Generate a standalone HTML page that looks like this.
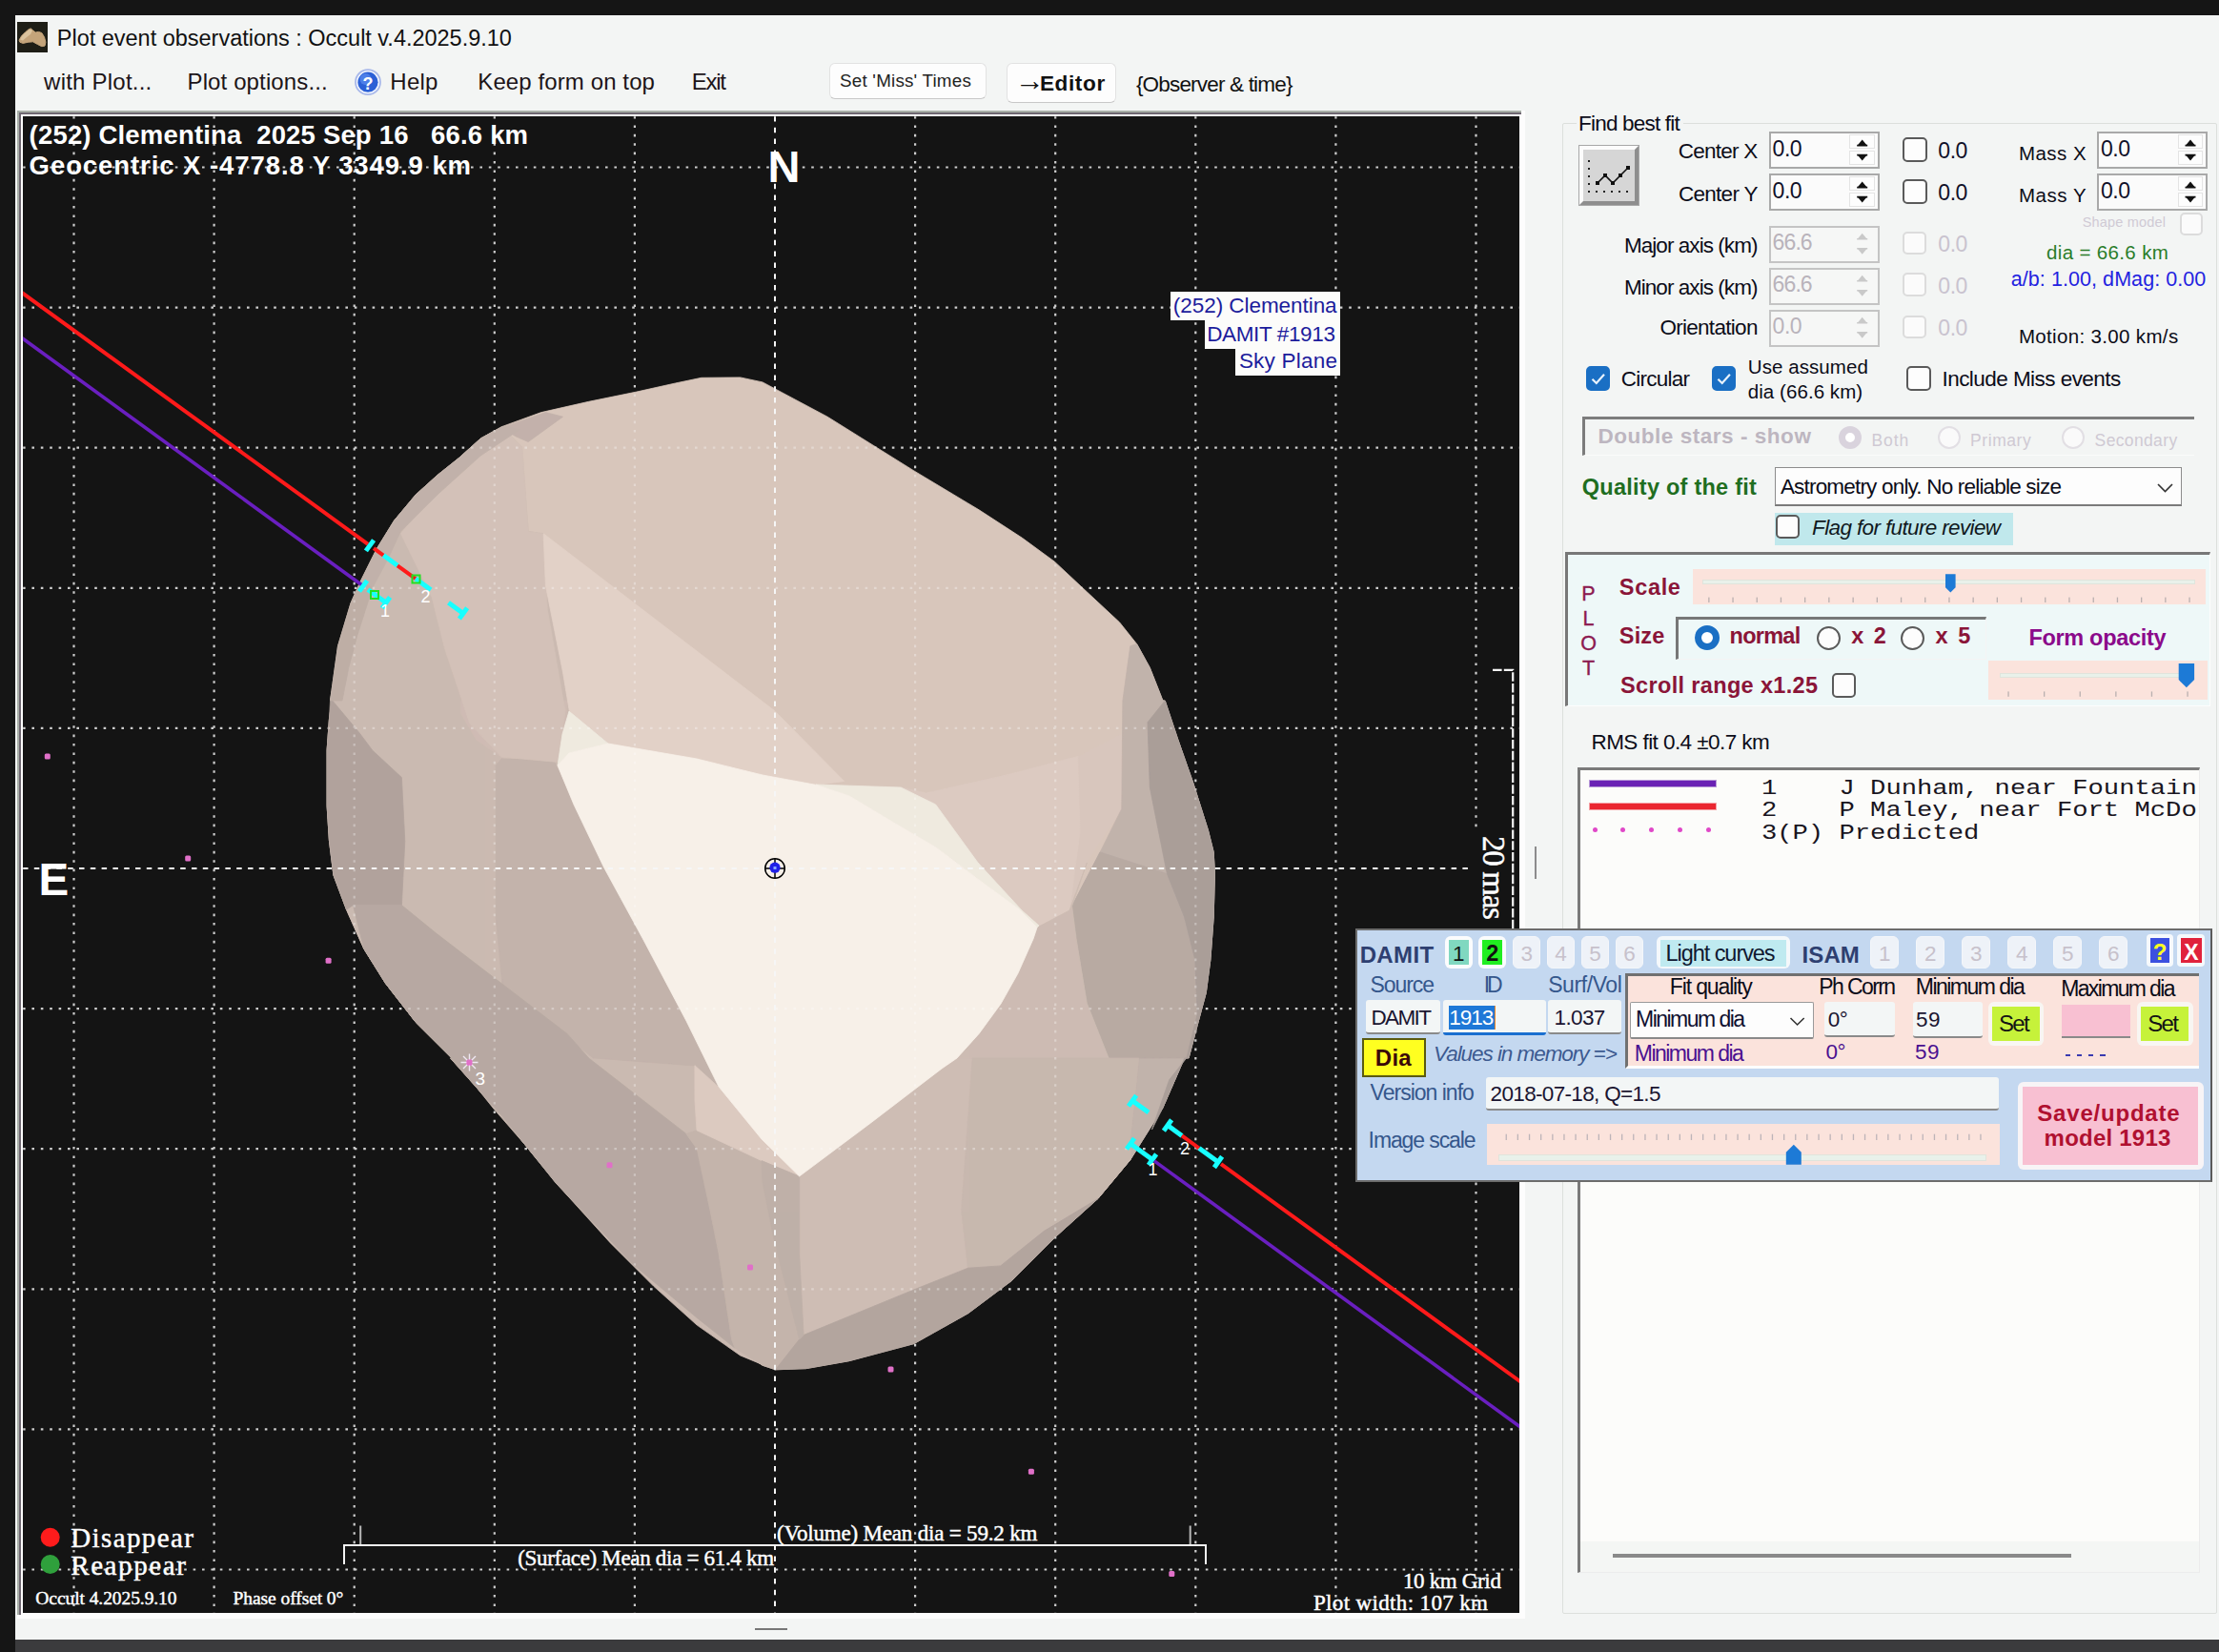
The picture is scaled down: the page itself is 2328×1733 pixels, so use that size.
<!DOCTYPE html>
<html lang="en"><head><meta charset="utf-8">
<title>Plot event observations : Occult v.4.2025.9.10</title>
<style>
html,body{margin:0;padding:0;}
body{width:2328px;height:1733px;background:#151515;position:relative;overflow:hidden;
font-family:'Liberation Sans', Arial, sans-serif;}
div{position:absolute;box-sizing:border-box;}
.t{position:absolute;white-space:pre;}
svg{position:absolute;left:0;top:0;}

.win{background:#f3f5f4;}
.spin{background:#fbfbfb;border:2px solid #a9a9a9;}
.spin.dis{border-color:#c4c4c4;background:#f6f7f6;}
.sb{background:#fdfdfd;border:1px solid #e4e4e4;}
.cb{background:#fdfdfd;border:2px solid #5a5a5a;border-radius:5px;}
.cb.dis{border-color:#dcdcdc;background:#fbfbfb;}
.cb.on{background:#1a6fc4;border-color:#1a6fc4;}
.sunk{border:2px solid;border-color:#6e6e6e #fff #fff #6e6e6e;}
.rad{border-radius:50%;border:2px solid #5a5a5a;background:#fdfdfd;}
.tb{background:#f3f6f6;border-bottom:2px solid #8a8a8a;border-radius:3px;}
.nb{background:#eef2f8;border-radius:5px;}
</style></head>
<body>
<div class="win" style="left:16.0px;top:16.0px;width:2312.0px;height:1704.0px;"></div>
<div style="left:16.0px;top:1720.0px;width:2312.0px;height:13.0px;background:#3b3b3d;"></div>
<div style="left:792.0px;top:1708.0px;width:34.0px;height:2.0px;background:#777;"></div>
<svg width="2328" height="1733" style="pointer-events:none">
<rect x="18" y="23" width="32" height="32" fill="#1e1e16"/>
<path d="M20.1 42.1 L22.5 37.8 L26.3 34 L30.2 30.7 L32.3 29.9 L34.5 31.8 L37.2 34 L40.5 33.4 L43.8 34.5 L46.5 38.9 L47.9 44.3 L47 48.1 L43.8 48.7 L39.4 46.5 L34.5 43.8 L29.1 44.3 L24.2 45.4 L20.9 44.3 Z" fill="#c4a47a" stroke="#c4a47a" stroke-width="1" stroke-linejoin="round"/>
<path d="M21 41.5 L23 37.8 L26.5 34.3 L30.2 31.2 L32.3 30.4 L34 32 L32 36 L28 39 L24 42.5 Z" fill="#dcc49e"/>
</svg>
<span id="t1" class="t" style="top:29.41px;font-size:23.5px;line-height:23.5px;color:#111;letter-spacing:-0.013px;left:59.8px;">Plot event observations : Occult v.4.2025.9.10</span>
<span id="t2" class="t" style="top:74.28px;font-size:24px;line-height:24px;color:#1c1418;letter-spacing:0.222px;left:46.1px;">with Plot...</span>
<span id="t3" class="t" style="top:74.28px;font-size:24px;line-height:24px;color:#1c1418;letter-spacing:0.124px;left:196.5px;">Plot options...</span>
<span id="t4" class="t" style="top:74.28px;font-size:24px;line-height:24px;color:#1c1418;letter-spacing:0.267px;left:409.3px;">Help</span>
<span id="t5" class="t" style="top:74.28px;font-size:24px;line-height:24px;color:#1c1418;letter-spacing:0.102px;left:501.3px;">Keep form on top</span>
<span id="t6" class="t" style="top:74.28px;font-size:24px;line-height:24px;color:#1c1418;letter-spacing:-1.285px;left:725.8px;">Exit</span>
<svg width="2328" height="1733" style="pointer-events:none">
<circle cx="386" cy="86.2" r="13" fill="#f4f7fe" stroke="#a9b9ea" stroke-width="1.8"/>
<circle cx="386" cy="86.2" r="10.6" fill="#2b60d6"/>
<circle cx="383.5" cy="83" r="6" fill="#5d8df0" opacity=".7"/>
<text x="386" y="93.5" font-family="Liberation Sans, Arial, sans-serif" font-weight="bold" font-size="18" fill="#fff" text-anchor="middle">?</text>
</svg>
<div style="left:869.5px;top:66.0px;width:165.0px;height:38.0px;background:#fdfdfd;border:1px solid #e2e2e2;border-bottom-color:#c8c8c8;border-radius:6px;"></div>
<span id="t7" class="t" style="top:76.09px;font-size:18.8px;line-height:18.8px;color:#222;letter-spacing:0.213px;left:881.1px;">Set 'Miss' Times</span>
<div style="left:1055.5px;top:65.7px;width:115.0px;height:42.0px;background:#fdfdfd;border:1px solid #e2e2e2;border-bottom-color:#c8c8c8;border-radius:6px;"></div>
<span id="t8" class="t" style="top:69.26px;font-size:31px;line-height:31px;color:#111;font-weight:bold;left:1065.0px;">→</span>
<span id="t9" class="t" style="top:76.87px;font-size:22.6px;line-height:22.6px;color:#111;font-weight:bold;letter-spacing:0.611px;left:1090.9px;">Editor</span>
<span id="t10" class="t" style="top:77.95px;font-size:22.5px;line-height:22.5px;color:#111;letter-spacing:-0.816px;left:1191.9px;">{Observer &amp; time}</span>
<div style="left:18.0px;top:116.0px;width:1582.0px;height:1581.5px;background:#fdfdfd;"></div>
<div style="left:18.0px;top:116.0px;width:1578.0px;height:1577.5px;border-style:solid;border-width:2px 0 0 2px;border-color:#a9b0a9;"></div>
<div style="left:20.0px;top:118.0px;width:1576.0px;height:1575.5px;border-style:solid;border-width:2px 0 0 2px;border-color:#6f6872;"></div>
<div style="left:24.2px;top:122.3px;width:1569.8px;height:1569.5px;background:#141414;"></div>
<svg width="2328" height="1733" viewBox="0 0 2328 1733">
<defs><clipPath id="pc"><rect x="24.2" y="122.3" width="1569.8" height="1569.5"/></clipPath>
<clipPath id="ac"><polygon points="735.8,396.3 776.6,395.9 800.0,400.9 868.1,437.2 958.9,493.9 1027.0,534.8 1072.4,564.3 1106.4,589.2 1140.4,621.0 1174.5,652.8 1192.6,675.5 1206.3,700.4 1219.9,734.9 1222.2,735.0 1235.8,775.9 1251.7,821.2 1267.5,871.2 1273.2,893.9 1274.4,916.6 1273.2,962.0 1269.8,1007.4 1265.3,1041.4 1256.2,1075.4 1247.1,1109.9 1242.6,1110.0 1219.9,1162.2 1185.8,1216.7 1151.8,1257.5 1106.4,1298.4 1061.0,1343.8 1015.6,1377.8 958.9,1409.6 890.8,1427.7 845.4,1435.7 813.6,1436.8 800.0,1432.3 731.2,1382.4 663.1,1325.6 583.7,1241.6 527.0,1171.3 472.5,1110.0 481.6,1117.7 436.2,1072.4 404.4,1031.5 381.7,995.2 363.5,954.3 349.9,918.0 345.4,881.7 343.1,845.4 343.1,800.0 343.1,786.7 345.4,754.9 352.2,705.0 346.5,734.9 354.5,677.7 368.1,632.4 378.3,609.7 395.3,575.6 413.5,546.1 436.2,518.9 458.9,498.4 481.6,480.3 504.3,459.9 527.0,447.4 567.8,432.6 617.7,421.3 667.7,411.1 708.5,402.0"/></clipPath></defs>
<g clip-path="url(#pc)">
<g stroke="#cecece" stroke-width="2.2" stroke-dasharray="2.6 6.8" opacity="1"><line x1="77.5" y1="122" x2="77.5" y2="1692"/><line x1="24" y1="175.5" x2="1594" y2="175.5"/><line x1="224.6" y1="122" x2="224.6" y2="1692"/><line x1="24" y1="322.6" x2="1594" y2="322.6"/><line x1="371.7" y1="122" x2="371.7" y2="1692"/><line x1="24" y1="469.7" x2="1594" y2="469.7"/><line x1="518.8" y1="122" x2="518.8" y2="1692"/><line x1="24" y1="616.8" x2="1594" y2="616.8"/><line x1="665.9" y1="122" x2="665.9" y2="1692"/><line x1="24" y1="763.9" x2="1594" y2="763.9"/><line x1="960.1" y1="122" x2="960.1" y2="1692"/><line x1="24" y1="1058.1" x2="1594" y2="1058.1"/><line x1="1107.2" y1="122" x2="1107.2" y2="1692"/><line x1="24" y1="1205.2" x2="1594" y2="1205.2"/><line x1="1254.3" y1="122" x2="1254.3" y2="1692"/><line x1="24" y1="1352.3" x2="1594" y2="1352.3"/><line x1="1401.4" y1="122" x2="1401.4" y2="1692"/><line x1="24" y1="1499.4" x2="1594" y2="1499.4"/><line x1="1548.5" y1="122" x2="1548.5" y2="1692"/><line x1="24" y1="1646.5" x2="1594" y2="1646.5"/></g>
<polygon points="735.8,396.3 776.6,395.9 800.0,400.9 868.1,437.2 958.9,493.9 1027.0,534.8 1072.4,564.3 1106.4,589.2 1140.4,621.0 1174.5,652.8 1192.6,675.5 1206.3,700.4 1219.9,734.9 1222.2,735.0 1235.8,775.9 1251.7,821.2 1267.5,871.2 1273.2,893.9 1274.4,916.6 1273.2,962.0 1269.8,1007.4 1265.3,1041.4 1256.2,1075.4 1247.1,1109.9 1242.6,1110.0 1219.9,1162.2 1185.8,1216.7 1151.8,1257.5 1106.4,1298.4 1061.0,1343.8 1015.6,1377.8 958.9,1409.6 890.8,1427.7 845.4,1435.7 813.6,1436.8 800.0,1432.3 731.2,1382.4 663.1,1325.6 583.7,1241.6 527.0,1171.3 472.5,1110.0 481.6,1117.7 436.2,1072.4 404.4,1031.5 381.7,995.2 363.5,954.3 349.9,918.0 345.4,881.7 343.1,845.4 343.1,800.0 343.1,786.7 345.4,754.9 352.2,705.0 346.5,734.9 354.5,677.7 368.1,632.4 378.3,609.7 395.3,575.6 413.5,546.1 436.2,518.9 458.9,498.4 481.6,480.3 504.3,459.9 527.0,447.4 567.8,432.6 617.7,421.3 667.7,411.1 708.5,402.0" fill="#d8c6bb" stroke="#d8c6bb" stroke-width="0.8"/>
<polygon points="499.7,466.7 527.0,448.5 547.4,468.9 554.2,557.5 570.1,559.7 572.4,614.2 590.5,705.0 597.3,745.8 585.1,802.6 602.0,844.0 633.6,910.0 674.5,985.0 720.0,1071.0 754.0,1140.0 799.0,1195.0 838.6,1234.0 837.9,1433.2 803.9,1433.2 776.6,1421.9 731.2,1390.1 685.8,1349.3 640.4,1303.9 595.1,1253.9 549.7,1199.5 517.9,1163.1 481.6,1117.7 436.2,1072.4 404.4,1031.5 381.7,995.2 363.5,954.3 349.9,918.0 345.4,881.7 343.1,845.4 343.1,800.0 343.1,786.7 345.4,754.9 352.2,705.0 363.5,668.7 374.9,636.9 390.8,596.0 408.9,564.3 436.2,528.0 472.5,491.6" fill="#cbbab1" stroke="#cbbab1" stroke-width="0.8"/>
<polygon points="527.0,795.1 581.4,798.5 601.9,843.9 633.6,909.8 674.5,984.7 719.9,1070.9 742.6,1109.9 754.0,1140.0 729.0,1118.0 622.3,1109.9 527.0,1032.3 520.2,962.0 520.2,803.1" fill="#c3b3ab" stroke="#c3b3ab" stroke-width="0.8"/>
<polygon points="483.8,735.0 595.1,735.0 592.8,775.9 581.4,796.3 527.0,795.1 499.7,775.9 483.8,748.6" fill="#cfbcb4" stroke="#cfbcb4" stroke-width="0.8"/>
<polygon points="420.5,559.7 499.7,466.5 527.0,448.5 547.7,469.2 554.3,557.7 569.6,559.7 574.3,639.6 592.9,746.2 585.0,799.4 526.4,794.1 493.1,759.5 466.4,679.6 453.1,626.3" fill="#d3c1b8" stroke="#d3c1b8" stroke-width="0.8"/>
<polygon points="527.0,448.5 572.4,432.6 590.5,437.2 554.2,463.5 540.6,457.6" fill="#c3b2ab" stroke="#c3b2ab" stroke-width="0.8"/>
<polygon points="378.3,609.7 395.3,575.6 413.5,546.1 436.2,518.9 458.9,498.4 481.6,480.3 504.3,459.9 527.0,447.4 545.1,450.8 504.3,478.0 458.9,518.9 420.3,557.5 406.7,587.0 390.8,616.5" fill="#c2b2aa" stroke="#c2b2aa" stroke-width="0.8"/>
<polygon points="346.5,735.0 348.8,735.0 377.2,769.0 390.8,787.2 421.4,815.6 424.8,882.5 421.4,949.5 370.4,949.5 363.5,954.3 349.9,918.0 345.4,881.7 343.1,845.4 343.1,800.0 343.1,786.7 345.4,754.9" fill="#b1a39d" stroke="#b1a39d" stroke-width="0.8"/>
<polygon points="346.5,734.9 354.5,677.7 368.1,632.4 378.3,609.7 390.8,616.5 374.9,666.4 365.8,700.4 359.0,734.9" fill="#beaea6" stroke="#beaea6" stroke-width="0.8"/>
<polygon points="370.4,949.5 421.4,949.5 458.9,980.1 527.0,1032.3 595.1,1084.5 617.7,1110.0 719.9,1189.4 731.2,1205.3 744.8,1268.9 753.9,1314.3 767.5,1405.1 770.9,1414.1 731.2,1382.4 663.1,1325.6 583.7,1241.6 527.0,1171.3 472.5,1110.0 481.6,1117.7 436.2,1072.4 404.4,1031.5 381.7,995.2" fill="#b7a9a2" stroke="#b7a9a2" stroke-width="0.8"/>
<polygon points="719.9,1189.4 731.2,1205.3 744.8,1268.9 753.9,1314.3 767.5,1405.1 770.9,1414.1 800.0,1432.3 813.6,1436.8 838.6,1405.1 838.6,1233.7 799.0,1217.6 731.0,1185.8" fill="#c4b4ab" stroke="#c4b4ab" stroke-width="0.8"/>
<polygon points="728.9,1117.7 753.9,1140.4 799.3,1194.9 838.6,1234.0 799.0,1217.6 731.0,1185.8 729.0,1154.0" fill="#dccac0" stroke="#dccac0" stroke-width="0.8"/>
<polygon points="570.1,559.7 812.9,745.8 885.6,819.4 857.0,823.5 800.0,813.0 731.0,796.0 638.0,780.0 597.3,745.8 590.5,705.0 572.4,614.2" fill="#e2d1c7" stroke="#e2d1c7" stroke-width="0.8"/>
<polygon points="1130.7,793.5 1177.5,769.0 1177.5,848.5 1140.4,905.0 1122.0,955.0 1133.0,873.0" fill="#d8c6bd" stroke="#d8c6bd" stroke-width="0.8"/>
<polygon points="945.0,826.0 971.8,832.1 1060.0,812.0 1130.7,793.5 1133.0,873.0 1122.0,955.0 1090.0,971.0 1072.0,955.0 1026.0,905.0 981.6,843.9" fill="#dccac1" stroke="#dccac1" stroke-width="0.8"/>
<polygon points="1185.8,677.7 1192.6,675.5 1206.3,700.4 1219.9,734.9 1222.2,735.0 1235.8,775.9 1251.7,821.2 1267.5,871.2 1273.2,893.9 1274.4,916.6 1273.2,962.0 1269.8,1007.4 1265.3,1041.4 1256.2,1075.4 1247.1,1109.9 1242.6,1110.0 1219.9,1162.2 1185.8,1216.7 1185.8,1196.2 1192.6,1132.7 1194.9,1110.0 1140.4,1052.7 1129.1,984.7 1124.6,950.6 1154.1,893.9 1176.8,848.5 1177.9,735.0" fill="#c2b3ab" stroke="#c2b3ab" stroke-width="0.8"/>
<polygon points="1154.1,893.9 1224.4,916.6 1242.6,962.0 1253.9,1007.4 1256.2,1064.1 1244.8,1109.9 1194.9,1110.0 1192.6,1132.7 1185.8,1196.2 1163.1,1109.9 1140.4,1052.7 1129.1,984.7 1124.6,950.6" fill="#b8aaa3" stroke="#b8aaa3" stroke-width="0.8"/>
<polygon points="1222.2,735.0 1235.8,775.9 1251.7,821.2 1267.5,871.2 1273.2,893.9 1274.4,916.6 1273.2,962.0 1269.8,1007.4 1265.3,1041.4 1256.2,1075.4 1247.1,1109.9 1242.6,1110.0 1219.9,1162.2 1208.5,1184.9 1226.7,1132.7 1244.8,1109.9 1256.2,1064.1 1253.9,1007.4 1242.6,962.0 1224.4,916.6 1215.3,871.2 1206.3,825.8 1204.0,757.7" fill="#aa9e99" stroke="#aa9e99" stroke-width="0.8"/>
<polygon points="1088.0,973.0 1122.0,955.0 1140.4,905.0 1124.6,950.6 1129.1,984.7 1140.4,1052.7 1163.1,1109.9 1185.8,1196.2 1185.8,1216.7 1151.8,1257.5 1095.1,1291.6 1049.7,1327.9 1015.6,1330.2 1008.8,1268.9 1020.2,1110.0 1004.0,1110.0 1027.0,1084.5 1050.0,1053.0 1068.0,1021.0 1084.0,985.0" fill="#cdbcb3" stroke="#cdbcb3" stroke-width="0.8"/>
<polygon points="838.6,1233.7 913.5,1178.1 988.4,1121.3 1004.3,1110.0 1020.2,1110.0 1008.8,1268.9 1015.6,1330.2 958.9,1352.9 843.1,1400.5 838.6,1314.3" fill="#cebdb4" stroke="#cebdb4" stroke-width="0.8"/>
<polygon points="1020.2,1110.0 1194.9,1110.0 1192.6,1132.7 1185.8,1196.2 1185.8,1216.7 1151.8,1257.5 1095.1,1291.6 1049.7,1327.9 1015.6,1330.2 1008.8,1268.9" fill="#c8b8af" stroke="#c8b8af" stroke-width="0.8"/>
<polygon points="843.1,1400.5 958.9,1352.9 1015.6,1330.2 1049.7,1327.9 1095.1,1291.6 1151.8,1257.5 1106.4,1298.4 1061.0,1343.8 1015.6,1377.8 958.9,1409.6 890.8,1427.7 845.4,1435.7 813.6,1436.8 838.6,1405.1" fill="#b3a59e" stroke="#b3a59e" stroke-width="0.8"/>
<polygon points="799.0,1217.6 838.6,1234.0 838.6,1233.7 838.6,1314.3 843.1,1400.5 838.6,1405.1 812.0,1300.0 800.0,1240.0" fill="#bfb0a8" stroke="#bfb0a8" stroke-width="0.8"/>
<polygon points="856.0,823.0 945.0,826.0 981.6,843.9 1026.0,905.0 1072.0,955.0 1090.0,971.0 1088.0,973.0 1068.0,953.0 1027.0,923.0 982.0,889.0 936.0,862.0 891.0,835.0" fill="#efeadf" stroke="#efeadf" stroke-width="0.8"/>
<polygon points="597.0,746.0 638.0,780.0 597.0,790.0 585.0,803.0 590.0,770.0" fill="#efeadf" stroke="#efeadf" stroke-width="0.8"/>
<polygon points="585.0,803.0 597.0,790.0 638.0,780.0 731.0,796.0 800.0,813.0 857.0,823.5 891.0,835.0 936.0,862.0 982.0,889.0 1027.0,923.0 1068.0,953.0 1088.0,973.0 1084.0,985.0 1068.0,1021.0 1050.0,1053.0 1027.0,1084.5 1004.0,1110.0 988.0,1121.0 913.5,1178.0 838.6,1234.0 799.0,1195.0 754.0,1140.0 720.0,1071.0 674.5,985.0 633.6,910.0 602.0,844.0" fill="#f7f0e8" stroke="#f7f0e8" stroke-width="0.8"/>
<g clip-path="url(#ac)"><g stroke="#ffffff" stroke-width="2.2" stroke-dasharray="2.6 6.8" opacity="0.32"><line x1="77.5" y1="122" x2="77.5" y2="1692"/><line x1="24" y1="175.5" x2="1594" y2="175.5"/><line x1="224.6" y1="122" x2="224.6" y2="1692"/><line x1="24" y1="322.6" x2="1594" y2="322.6"/><line x1="371.7" y1="122" x2="371.7" y2="1692"/><line x1="24" y1="469.7" x2="1594" y2="469.7"/><line x1="518.8" y1="122" x2="518.8" y2="1692"/><line x1="24" y1="616.8" x2="1594" y2="616.8"/><line x1="665.9" y1="122" x2="665.9" y2="1692"/><line x1="24" y1="763.9" x2="1594" y2="763.9"/><line x1="960.1" y1="122" x2="960.1" y2="1692"/><line x1="24" y1="1058.1" x2="1594" y2="1058.1"/><line x1="1107.2" y1="122" x2="1107.2" y2="1692"/><line x1="24" y1="1205.2" x2="1594" y2="1205.2"/><line x1="1254.3" y1="122" x2="1254.3" y2="1692"/><line x1="24" y1="1352.3" x2="1594" y2="1352.3"/><line x1="1401.4" y1="122" x2="1401.4" y2="1692"/><line x1="24" y1="1499.4" x2="1594" y2="1499.4"/><line x1="1548.5" y1="122" x2="1548.5" y2="1692"/><line x1="24" y1="1646.5" x2="1594" y2="1646.5"/></g></g>
<line x1="813.0" y1="122" x2="813.0" y2="1692" stroke="#f6f6f6" stroke-width="2" stroke-dasharray="5.5 6.3"/>
<line x1="24" y1="911.0" x2="1546" y2="911.0" stroke="#f6f6f6" stroke-width="2" stroke-dasharray="5.5 6.3"/>
<rect x="46.8" y="790.4" width="6" height="6" rx="1.5" fill="#e070c8"/>
<rect x="194.2" y="897.6" width="6" height="6" rx="1.5" fill="#e070c8"/>
<rect x="341.6" y="1004.8" width="6" height="6" rx="1.5" fill="#e070c8"/>
<rect x="489.1" y="1112.0" width="6" height="6" rx="1.5" fill="#e070c8"/>
<rect x="636.5" y="1219.2" width="6" height="6" rx="1.5" fill="#e070c8"/>
<rect x="784.0" y="1326.4" width="6" height="6" rx="1.5" fill="#e070c8"/>
<rect x="931.5" y="1433.6" width="6" height="6" rx="1.5" fill="#e070c8"/>
<rect x="1078.9" y="1540.8" width="6" height="6" rx="1.5" fill="#e070c8"/>
<rect x="1226.3" y="1648.0" width="6" height="6" rx="1.5" fill="#e070c8"/>
<g stroke="#f0e8f4" stroke-width="1.4"><path d="M483.5 1114.5h18M492.5 1105.5v18M486.0 1108.0l13 13M486.0 1121.0l13 -13"/></g><rect x="489.5" y="1111.5" width="6" height="6" rx="1.5" fill="#e070c8"/>
<line x1="20.0" y1="304.8" x2="386.0" y2="570.8" stroke="#ff1a1a" stroke-width="4"/>
<line x1="392.1" y1="566.6" x2="383.9" y2="577.9" stroke="#18ffff" stroke-width="5"/>
<line x1="392.0" y1="575.2" x2="402.3" y2="582.6" stroke="#ff1a1a" stroke-width="4"/>
<line x1="402.3" y1="582.6" x2="417.0" y2="593.3" stroke="#18ffff" stroke-width="5"/>
<line x1="417.0" y1="593.3" x2="436.0" y2="607.1" stroke="#ff1a1a" stroke-width="4"/>
<line x1="436.0" y1="607.1" x2="452.0" y2="618.8" stroke="#18ffff" stroke-width="5"/>
<line x1="470.5" y1="632.2" x2="486.0" y2="643.5" stroke="#18ffff" stroke-width="5"/>
<line x1="490.1" y1="637.8" x2="481.9" y2="649.1" stroke="#18ffff" stroke-width="5"/>
<line x1="20.0" y1="352.4" x2="380.0" y2="614.0" stroke="#6a1fc0" stroke-width="3.6"/>
<line x1="385.1" y1="609.1" x2="376.9" y2="620.4" stroke="#18ffff" stroke-width="5"/>
<line x1="386.0" y1="618.4" x2="405.0" y2="632.2" stroke="#18ffff" stroke-width="5"/>
<line x1="409.1" y1="626.5" x2="400.9" y2="637.9" stroke="#18ffff" stroke-width="5"/>
<rect x="432.5" y="603.5" width="8" height="8" fill="none" stroke="#22e022" stroke-width="2"/>
<rect x="389" y="620" width="8" height="8" fill="none" stroke="#22e022" stroke-width="2"/>
<line x1="1192.1" y1="1149.1" x2="1183.9" y2="1160.4" stroke="#18ffff" stroke-width="5"/>
<line x1="1188.0" y1="1154.7" x2="1205.0" y2="1167.1" stroke="#18ffff" stroke-width="5"/>
<line x1="1190.1" y1="1194.1" x2="1181.9" y2="1205.4" stroke="#18ffff" stroke-width="5"/>
<line x1="1186.0" y1="1199.8" x2="1209.0" y2="1216.5" stroke="#18ffff" stroke-width="5"/>
<line x1="1213.1" y1="1210.8" x2="1204.9" y2="1222.1" stroke="#18ffff" stroke-width="5"/>
<line x1="1211.0" y1="1217.9" x2="1600.0" y2="1500.6" stroke="#6a1fc0" stroke-width="3.6"/>
<line x1="1229.1" y1="1174.8" x2="1220.9" y2="1186.2" stroke="#18ffff" stroke-width="5"/>
<line x1="1225.0" y1="1180.5" x2="1240.0" y2="1191.4" stroke="#18ffff" stroke-width="5"/>
<line x1="1240.0" y1="1191.4" x2="1258.0" y2="1204.5" stroke="#ff1a1a" stroke-width="4"/>
<line x1="1258.0" y1="1204.5" x2="1278.0" y2="1219.0" stroke="#18ffff" stroke-width="5"/>
<line x1="1282.1" y1="1213.3" x2="1273.9" y2="1224.7" stroke="#18ffff" stroke-width="5"/>
<line x1="1281.0" y1="1221.2" x2="1600.0" y2="1453.0" stroke="#ff1a1a" stroke-width="4"/>
<text x="399" y="646.5" font-family="Liberation Sans, Arial, sans-serif" font-size="18" fill="#fff">1</text>
<text x="441.5" y="632.3" font-family="Liberation Sans, Arial, sans-serif" font-size="18" fill="#fff">2</text>
<text x="1204.5" y="1232.5" font-family="Liberation Sans, Arial, sans-serif" font-size="18" fill="#fff">1</text>
<text x="1238" y="1210.5" font-family="Liberation Sans, Arial, sans-serif" font-size="18" fill="#fff">2</text>
<text x="498.5" y="1137.5" font-family="Liberation Sans, Arial, sans-serif" font-size="19" fill="#fff">3</text>
<g fill="none" stroke="#000" stroke-width="1.5"><circle cx="813.0" cy="911.0" r="10.3"/><path d="M813.0 901.0v20M803.0 911.0h20"/></g><circle cx="813.0" cy="910.2" r="5.6" fill="#2020e8"/><rect x="811.5" y="909.0" width="3" height="3" fill="#8aa8ff"/>
<path d="M361 1641 V1621 H1265 V1641" fill="none" stroke="#f4f4f4" stroke-width="2"/>
<path d="M378.2 1600.5 V1620 M1248.7 1600.5 V1620" fill="none" stroke="#b8b8b8" stroke-width="2"/>
<rect x="1545.5" y="868" width="37" height="104" fill="#141414"/>
<path d="M1566 702.8 H1587.2 V1119.5 H1566" fill="none" stroke="#f4f4f4" stroke-width="2.2" stroke-dasharray="9.6 2.2"/>
<circle cx="52.7" cy="1612.7" r="10" fill="#ff1c1c"/><circle cx="52.7" cy="1641" r="10" fill="#2fa03c"/>
</g></svg>
<span id="t11" class="t" style="top:127.72px;font-size:27.5px;line-height:27.5px;color:#fff;font-weight:bold;letter-spacing:0.179px;left:30.6px;">(252) Clementina  2025 Sep 16   66.6 km</span>
<span id="t12" class="t" style="top:159.72px;font-size:27.5px;line-height:27.5px;color:#fff;font-weight:bold;letter-spacing:0.929px;left:30.6px;">Geocentric X -4778.8 Y 3349.9 km</span>
<span id="t13" class="t" style="top:151.21px;font-size:47px;line-height:47px;color:#fff;font-weight:bold;left:805.4px;">N</span>
<span id="t14" class="t" style="top:898.79px;font-size:47.5px;line-height:47.5px;color:#fff;font-weight:bold;left:40.5px;">E</span>
<div style="left:1227.9px;top:306.0px;width:178.1px;height:30.0px;background:#fcfcfa;"></div>
<span id="t15" class="t" style="top:309.85px;font-size:22.5px;line-height:22.5px;color:#1c1c9c;letter-spacing:-0.051px;left:1230.8px;">(252) Clementina</span>
<div style="left:1263.8px;top:336.0px;width:142.2px;height:30.0px;background:#fcfcfa;"></div>
<span id="t16" class="t" style="top:339.85px;font-size:22.5px;line-height:22.5px;color:#1c1c9c;letter-spacing:-0.368px;left:1266.2px;">DAMIT #1913</span>
<div style="left:1295.7px;top:365.9px;width:110.3px;height:28.1px;background:#fcfcfa;"></div>
<span id="t17" class="t" style="top:367.65px;font-size:22.5px;line-height:22.5px;color:#1c1c9c;letter-spacing:0.214px;left:1299.9px;">Sky Plane</span>
<span id="t18" class="t" style="top:1599.31px;font-size:29px;line-height:29px;color:#fff;font-family:'Liberation Serif', 'Times New Roman', serif;letter-spacing:1.406px;left:74.2px;-webkit-text-stroke:0.45px #fff;">Disappear</span>
<span id="t19" class="t" style="top:1627.71px;font-size:29px;line-height:29px;color:#fff;font-family:'Liberation Serif', 'Times New Roman', serif;letter-spacing:1.601px;left:74.2px;-webkit-text-stroke:0.45px #fff;">Reappear</span>
<span id="t20" class="t" style="top:1667.17px;font-size:19.5px;line-height:19.5px;color:#fff;font-family:'Liberation Serif', 'Times New Roman', serif;letter-spacing:-0.072px;left:37.3px;-webkit-text-stroke:0.45px #fff;">Occult 4.2025.9.10</span>
<span id="t21" class="t" style="top:1667.17px;font-size:19.5px;line-height:19.5px;color:#fff;font-family:'Liberation Serif', 'Times New Roman', serif;letter-spacing:-0.078px;left:244.6px;-webkit-text-stroke:0.45px #fff;">Phase offset 0°</span>
<span id="t22" class="t" style="top:1622.74px;font-size:23px;line-height:23px;color:#fff;font-family:'Liberation Serif', 'Times New Roman', serif;letter-spacing:-0.316px;left:543.2px;-webkit-text-stroke:0.45px #fff;">(Surface) Mean dia = 61.4 km</span>
<span id="t23" class="t" style="top:1596.74px;font-size:23px;line-height:23px;color:#fff;font-family:'Liberation Serif', 'Times New Roman', serif;letter-spacing:-0.193px;left:815.1px;-webkit-text-stroke:0.45px #fff;">(Volume) Mean dia = 59.2 km</span>
<span id="t24" class="t" style="top:1647.14px;font-size:23px;line-height:23px;color:#fff;font-family:'Liberation Serif', 'Times New Roman', serif;letter-spacing:-0.333px;right:753.4px;-webkit-text-stroke:0.45px #fff;">10 km Grid</span>
<span id="t25" class="t" style="top:1669.54px;font-size:23px;line-height:23px;color:#fff;font-family:'Liberation Serif', 'Times New Roman', serif;letter-spacing:0.357px;right:766.7px;-webkit-text-stroke:0.45px #fff;">Plot width: 107 km</span>
<span id="t26" class="t" style="top:877.46px;font-size:33px;line-height:33px;color:#fff;font-family:'Liberation Serif', 'Times New Roman', serif;left:1583.1px;transform:rotate(90deg);transform-origin:0 0;letter-spacing:-1.3px;-webkit-text-stroke:0.45px #fff;">20 mas</span>
<div style="left:1638.5px;top:129.0px;width:687.5px;height:1564.0px;border:1px solid #dcdfdc;border-radius:2px;"></div>
<div style="left:1654.0px;top:120.0px;width:112.0px;height:22.0px;background:#f3f5f4;"></div>
<span id="t27" class="t" style="top:119.25px;font-size:22.5px;line-height:22.5px;color:#0c0c18;letter-spacing:-0.807px;left:1656.1px;">Find best fit</span>
<div style="left:1656.4px;top:152.2px;width:63.4px;height:63.4px;background:#d6d6d6;border-style:solid;border-width:5px;border-color:#fcfcfc #8e8e8e #8e8e8e #fcfcfc;outline:1px solid #a8a8a8;outline-offset:-1px;"></div>
<svg width="2328" height="1733"><g fill="#111" stroke="none">
<polyline points="1676,192 1684,184 1692,192 1700,184 1708,176" fill="none" stroke="#111" stroke-width="1.6"/>
<rect x="1674" y="190" width="4" height="4"/><rect x="1682" y="182" width="4" height="4"/><rect x="1690" y="190" width="4" height="4"/><rect x="1698" y="182" width="4" height="4"/><rect x="1706" y="174" width="4" height="4"/>
<g fill="#222"><rect x="1666" y="168" width="2" height="2"/><rect x="1666" y="176" width="2" height="2"/><rect x="1666" y="184" width="2" height="2"/><rect x="1666" y="192" width="2" height="2"/><rect x="1666" y="200" width="2" height="2"/>
<rect x="1674" y="200" width="2" height="2"/><rect x="1682" y="200" width="2" height="2"/><rect x="1690" y="200" width="2" height="2"/><rect x="1698" y="200" width="2" height="2"/><rect x="1706" y="200" width="2" height="2"/></g>
</g></svg>
<span id="t28" class="t" style="top:148.45px;font-size:22.5px;line-height:22.5px;color:#0c0c18;letter-spacing:-0.753px;right:484.4px;">Center X</span>
<span id="t29" class="t" style="top:193.05px;font-size:22.5px;line-height:22.5px;color:#0c0c18;letter-spacing:-0.695px;right:484.3px;">Center Y</span>
<span id="t30" class="t" style="top:247.45px;font-size:22.5px;line-height:22.5px;color:#0c0c18;letter-spacing:-0.946px;right:484.5px;">Major axis (km)</span>
<span id="t31" class="t" style="top:290.85px;font-size:22.5px;line-height:22.5px;color:#0c0c18;letter-spacing:-0.946px;right:484.5px;">Minor axis (km)</span>
<span id="t32" class="t" style="top:332.55px;font-size:22.5px;line-height:22.5px;color:#0c0c18;letter-spacing:-0.704px;right:484.3px;">Orientation</span>
<div class="spin" style="left:1856.0px;top:138.4px;width:115.6px;height:39.0px;"></div>
<div class="sb" style="left:1940.3px;top:141.4px;width:26.7px;height:14.8px;"></div>
<div class="sb" style="left:1940.3px;top:158.4px;width:26.7px;height:14.8px;"></div>
<svg width="2328" height="1733"><path d="M1948.7 152.6 L1953.7 146.6 L1958.7 152.6 Z M1948.7 162.6 L1953.7 168.6 L1958.7 162.6 Z" fill="#111"/><path d="M1948.2 152.6 h11 M1948.2 162.6 h11" stroke="#111" stroke-width="1.6"/></svg>
<span id="t33" class="t" style="top:144.83px;font-size:23px;line-height:23px;color:#101028;letter-spacing:-0.457px;left:1859.6px;">0.0</span>
<div class="spin" style="left:1856.0px;top:182.4px;width:115.6px;height:39.0px;"></div>
<div class="sb" style="left:1940.3px;top:185.4px;width:26.7px;height:14.8px;"></div>
<div class="sb" style="left:1940.3px;top:202.4px;width:26.7px;height:14.8px;"></div>
<svg width="2328" height="1733"><path d="M1948.7 196.6 L1953.7 190.6 L1958.7 196.6 Z M1948.7 206.6 L1953.7 212.6 L1958.7 206.6 Z" fill="#111"/><path d="M1948.2 196.6 h11 M1948.2 206.6 h11" stroke="#111" stroke-width="1.6"/></svg>
<span id="t34" class="t" style="top:188.83px;font-size:23px;line-height:23px;color:#101028;letter-spacing:-0.457px;left:1859.6px;">0.0</span>
<div class="spin dis" style="left:1856.0px;top:236.6px;width:115.6px;height:39.0px;"></div>
<svg width="2328" height="1733"><path d="M1948.7 250.79999999999998 L1953.7 244.79999999999998 L1958.7 250.79999999999998 Z M1948.7 260.8 L1953.7 266.8 L1958.7 260.8 Z" fill="#c9c9c9"/><path d="M1948.2 250.79999999999998 h11 M1948.2 260.8 h11" stroke="#c9c9c9" stroke-width="1.6"/></svg>
<span id="t35" class="t" style="top:243.03px;font-size:23px;line-height:23px;color:#b9b3bb;letter-spacing:-0.899px;left:1859.6px;">66.6</span>
<div class="spin dis" style="left:1856.0px;top:280.5px;width:115.6px;height:39.0px;"></div>
<svg width="2328" height="1733"><path d="M1948.7 294.7 L1953.7 288.7 L1958.7 294.7 Z M1948.7 304.7 L1953.7 310.7 L1958.7 304.7 Z" fill="#c9c9c9"/><path d="M1948.2 294.7 h11 M1948.2 304.7 h11" stroke="#c9c9c9" stroke-width="1.6"/></svg>
<span id="t36" class="t" style="top:286.93px;font-size:23px;line-height:23px;color:#b9b3bb;letter-spacing:-0.899px;left:1859.6px;">66.6</span>
<div class="spin dis" style="left:1856.0px;top:324.6px;width:115.6px;height:39.0px;"></div>
<svg width="2328" height="1733"><path d="M1948.7 338.8 L1953.7 332.8 L1958.7 338.8 Z M1948.7 348.8 L1953.7 354.8 L1958.7 348.8 Z" fill="#c9c9c9"/><path d="M1948.2 338.8 h11 M1948.2 348.8 h11" stroke="#c9c9c9" stroke-width="1.6"/></svg>
<span id="t37" class="t" style="top:331.03px;font-size:23px;line-height:23px;color:#b9b3bb;letter-spacing:-0.457px;left:1859.6px;">0.0</span>
<div class="spin" style="left:2200.3px;top:138.4px;width:115.6px;height:39.0px;"></div>
<div class="sb" style="left:2284.6px;top:141.4px;width:26.7px;height:14.8px;"></div>
<div class="sb" style="left:2284.6px;top:158.4px;width:26.7px;height:14.8px;"></div>
<svg width="2328" height="1733"><path d="M2293.0 152.6 L2298.0 146.6 L2303.0 152.6 Z M2293.0 162.6 L2298.0 168.6 L2303.0 162.6 Z" fill="#111"/><path d="M2292.5 152.6 h11 M2292.5 162.6 h11" stroke="#111" stroke-width="1.6"/></svg>
<span id="t38" class="t" style="top:144.83px;font-size:23px;line-height:23px;color:#101028;letter-spacing:-0.457px;left:2204.0px;">0.0</span>
<div class="spin" style="left:2200.3px;top:182.4px;width:115.6px;height:39.0px;"></div>
<div class="sb" style="left:2284.6px;top:185.4px;width:26.7px;height:14.8px;"></div>
<div class="sb" style="left:2284.6px;top:202.4px;width:26.7px;height:14.8px;"></div>
<svg width="2328" height="1733"><path d="M2293.0 196.6 L2298.0 190.6 L2303.0 196.6 Z M2293.0 206.6 L2298.0 212.6 L2303.0 206.6 Z" fill="#111"/><path d="M2292.5 196.6 h11 M2292.5 206.6 h11" stroke="#111" stroke-width="1.6"/></svg>
<span id="t39" class="t" style="top:188.83px;font-size:23px;line-height:23px;color:#101028;letter-spacing:-0.457px;left:2204.0px;">0.0</span>
<div class="cb" style="left:1996.4px;top:144.2px;width:25.4px;height:25.4px;"></div>
<span id="t40" class="t" style="top:147.23px;font-size:23px;line-height:23px;color:#101028;letter-spacing:-0.457px;left:2033.3px;">0.0</span>
<div class="cb" style="left:1996.4px;top:188.3px;width:25.4px;height:25.4px;"></div>
<span id="t41" class="t" style="top:191.33px;font-size:23px;line-height:23px;color:#101028;letter-spacing:-0.457px;left:2033.3px;">0.0</span>
<div class="cb dis" style="left:1996.4px;top:242.6px;width:24.5px;height:24.5px;"></div>
<span id="t42" class="t" style="top:244.73px;font-size:23px;line-height:23px;color:#c9c3cf;letter-spacing:-0.457px;left:2033.3px;">0.0</span>
<div class="cb dis" style="left:1996.4px;top:286.2px;width:24.5px;height:24.5px;"></div>
<span id="t43" class="t" style="top:288.83px;font-size:23px;line-height:23px;color:#c9c3cf;letter-spacing:-0.457px;left:2033.3px;">0.0</span>
<div class="cb dis" style="left:1996.4px;top:330.6px;width:24.5px;height:24.5px;"></div>
<span id="t44" class="t" style="top:332.63px;font-size:23px;line-height:23px;color:#c9c3cf;letter-spacing:-0.457px;left:2033.3px;">0.0</span>
<span id="t45" class="t" style="top:150.95px;font-size:20.5px;line-height:20.5px;color:#0c0c18;letter-spacing:0.497px;left:2117.9px;">Mass X</span>
<span id="t46" class="t" style="top:195.25px;font-size:20.5px;line-height:20.5px;color:#0c0c18;letter-spacing:0.572px;left:2117.9px;">Mass Y</span>
<span id="t47" class="t" style="top:226.33px;font-size:14.5px;line-height:14.5px;color:#d0cad4;letter-spacing:0.185px;left:2184.7px;">Shape model</span>
<div class="cb dis" style="left:2286.8px;top:222.6px;width:24.0px;height:24.0px;"></div>
<span id="t48" class="t" style="top:254.85px;font-size:20.5px;line-height:20.5px;color:#2a7d2a;letter-spacing:0.350px;left:2147.0px;">dia = 66.6 km</span>
<span id="t49" class="t" style="top:282.80px;font-size:21.5px;line-height:21.5px;color:#2222e0;letter-spacing:0.072px;left:2109.7px;">a/b: 1.00, dMag: 0.00</span>
<span id="t50" class="t" style="top:342.85px;font-size:20.5px;line-height:20.5px;color:#0c0c18;letter-spacing:0.341px;left:2117.9px;">Motion: 3.00 km/s</span>
<div class="cb on" style="left:1664.0px;top:384.2px;width:25.4px;height:25.4px;"></div>
<svg width="2328" height="1733"><polyline points="1670.5,397.7 1674.8,402.0 1683,392.7" fill="none" stroke="#e8f2fc" stroke-width="2.2"/></svg>
<span id="t51" class="t" style="top:387.45px;font-size:22.5px;line-height:22.5px;color:#0c0c18;letter-spacing:-0.756px;left:1700.7px;">Circular</span>
<div class="cb on" style="left:1795.9px;top:384.2px;width:25.4px;height:25.4px;"></div>
<svg width="2328" height="1733"><polyline points="1802.4,397.7 1806.7,402.0 1814.9,392.7" fill="none" stroke="#e8f2fc" stroke-width="2.2"/></svg>
<span id="t52" class="t" style="top:374.95px;font-size:20.5px;line-height:20.5px;color:#0c0c18;letter-spacing:0.070px;left:1833.8px;">Use assumed</span>
<span id="t53" class="t" style="top:401.25px;font-size:20.5px;line-height:20.5px;color:#0c0c18;letter-spacing:0.059px;left:1833.8px;">dia (66.6 km)</span>
<div class="cb" style="left:2000.4px;top:384.2px;width:25.4px;height:25.4px;"></div>
<span id="t54" class="t" style="top:387.45px;font-size:22.5px;line-height:22.5px;color:#0c0c18;letter-spacing:-0.548px;left:2037.5px;">Include Miss events</span>
<div style="left:1660.4px;top:436.5px;width:642.0px;height:41.5px;border-style:solid;border-width:3px 0 1px 3px;border-color:#7c7c7c #fff #fbfbfb #7c7c7c;"></div>
<span id="t55" class="t" style="top:447.35px;font-size:22.5px;line-height:22.5px;color:#bdb6c0;font-weight:bold;letter-spacing:0.540px;left:1676.4px;">Double stars - show</span>
<div style="left:1928.5px;top:447.0px;width:24.0px;height:24.0px;border-radius:50%;background:#fff;border:7px solid #d9d3dd;"></div>
<span id="t56" class="t" style="top:453.69px;font-size:17.5px;line-height:17.5px;color:#cfc9d3;letter-spacing:0.858px;left:1963.6px;">Both</span>
<div style="left:2032.5px;top:447.0px;width:24.0px;height:24.0px;border-radius:50%;border:2px solid #e2dfe4;background:#fafafa;"></div>
<span id="t57" class="t" style="top:453.69px;font-size:17.5px;line-height:17.5px;color:#cfc9d3;letter-spacing:0.549px;left:2067.1px;">Primary</span>
<div style="left:2162.5px;top:447.0px;width:24.0px;height:24.0px;border-radius:50%;border:2px solid #e2dfe4;background:#fafafa;"></div>
<span id="t58" class="t" style="top:453.69px;font-size:17.5px;line-height:17.5px;color:#cfc9d3;letter-spacing:0.363px;left:2197.6px;">Secondary</span>
<span id="t59" class="t" style="top:500.31px;font-size:23.5px;line-height:23.5px;color:#1f6e1f;font-weight:bold;letter-spacing:0.250px;left:1659.8px;">Quality of the fit</span>
<div style="left:1862.4px;top:490.4px;width:426.6px;height:40.6px;background:#fdfdfd;border:1px solid #8c8c8c;border-bottom:2px solid #7a7a7a;"></div>
<span id="t60" class="t" style="top:499.55px;font-size:22.5px;line-height:22.5px;color:#0c0c18;letter-spacing:-0.810px;left:1867.9px;">Astrometry only. No reliable size</span>
<svg width="2328" height="1733"><polyline points="2264,508 2271.5,515.5 2279,508" fill="none" stroke="#333" stroke-width="1.6"/></svg>
<div style="left:1862.0px;top:538.0px;width:250.0px;height:34.0px;background:#c0e8ec;"></div>
<div class="cb" style="left:1862.9px;top:540.4px;width:25.0px;height:25.0px;"></div>
<span id="t61" class="t" style="top:542.55px;font-size:22.5px;line-height:22.5px;color:#101820;font-style:italic;letter-spacing:-0.634px;left:1901.1px;">Flag for future review</span>
<div style="left:1642.0px;top:578.5px;width:677.0px;height:162.0px;background:#eef8f8;border-style:solid;border-width:3px 1px 1px 3px;border-color:#777 #fdfdfd #fdfdfd #777;"></div>
<span id="t62" class="t" style="top:612.60px;font-size:21.5px;line-height:21.5px;color:#8c1a50;left:1166.5px;width:1000px;text-align:center;-webkit-text-stroke:0.35px #8c1a50;">P</span>
<span id="t63" class="t" style="top:639.40px;font-size:21.5px;line-height:21.5px;color:#8c1a50;left:1166.5px;width:1000px;text-align:center;-webkit-text-stroke:0.35px #8c1a50;">L</span>
<span id="t64" class="t" style="top:664.60px;font-size:21.5px;line-height:21.5px;color:#8c1a50;left:1166.5px;width:1000px;text-align:center;-webkit-text-stroke:0.35px #8c1a50;">O</span>
<span id="t65" class="t" style="top:691.40px;font-size:21.5px;line-height:21.5px;color:#8c1a50;left:1166.5px;width:1000px;text-align:center;-webkit-text-stroke:0.35px #8c1a50;">T</span>
<span id="t66" class="t" style="top:604.61px;font-size:23.5px;line-height:23.5px;color:#8a1538;font-weight:bold;letter-spacing:0.673px;left:1698.8px;">Scale</span>
<div style="left:1775.6px;top:596.7px;width:538.4px;height:37.3px;background:#fbe3dc;"></div>
<div style="left:1785.7px;top:607.7px;width:517.3px;height:5.4px;background:#e9f1ea;border:1px solid #e0e4dc;"></div>
<svg width="2328" height="1733"><path d="M2041 602.3 h10.6 v13.9 l-5.3 5.3 l-5.3 -5.3 Z" fill="#1d7ad6"/></svg>
<svg width="2328" height="1733"><rect x="1792.2" y="626.6" width="1.3" height="5.4" fill="#b9b0b0"/><rect x="1817.4" y="626.6" width="1.3" height="5.4" fill="#b9b0b0"/><rect x="1842.6" y="626.6" width="1.3" height="5.4" fill="#b9b0b0"/><rect x="1867.8" y="626.6" width="1.3" height="5.4" fill="#b9b0b0"/><rect x="1893.0" y="626.6" width="1.3" height="5.4" fill="#b9b0b0"/><rect x="1918.2" y="626.6" width="1.3" height="5.4" fill="#b9b0b0"/><rect x="1943.5" y="626.6" width="1.3" height="5.4" fill="#b9b0b0"/><rect x="1968.7" y="626.6" width="1.3" height="5.4" fill="#b9b0b0"/><rect x="1993.9" y="626.6" width="1.3" height="5.4" fill="#b9b0b0"/><rect x="2019.1" y="626.6" width="1.3" height="5.4" fill="#b9b0b0"/><rect x="2044.3" y="626.6" width="1.3" height="5.4" fill="#b9b0b0"/><rect x="2069.5" y="626.6" width="1.3" height="5.4" fill="#b9b0b0"/><rect x="2094.7" y="626.6" width="1.3" height="5.4" fill="#b9b0b0"/><rect x="2119.9" y="626.6" width="1.3" height="5.4" fill="#b9b0b0"/><rect x="2145.1" y="626.6" width="1.3" height="5.4" fill="#b9b0b0"/><rect x="2170.3" y="626.6" width="1.3" height="5.4" fill="#b9b0b0"/><rect x="2195.6" y="626.6" width="1.3" height="5.4" fill="#b9b0b0"/><rect x="2220.8" y="626.6" width="1.3" height="5.4" fill="#b9b0b0"/><rect x="2246.0" y="626.6" width="1.3" height="5.4" fill="#b9b0b0"/><rect x="2271.2" y="626.6" width="1.3" height="5.4" fill="#b9b0b0"/><rect x="2296.4" y="626.6" width="1.3" height="5.4" fill="#b9b0b0"/></svg>
<span id="t67" class="t" style="top:656.01px;font-size:23.5px;line-height:23.5px;color:#8a1538;font-weight:bold;letter-spacing:0.161px;left:1698.8px;">Size</span>
<div style="left:1758.3px;top:646.5px;width:325.5px;height:45.0px;border-style:solid;border-width:3px 1px 1px 3px;border-color:#777 #f4f4f4 #f4f4f4 #777;"></div>
<div style="left:1778.0px;top:656.2px;width:26.0px;height:26.0px;border-radius:50%;background:#fff;border:7.5px solid #1a6fc4;"></div>
<span id="t68" class="t" style="top:656.01px;font-size:23.5px;line-height:23.5px;color:#8a1538;font-weight:bold;letter-spacing:-0.729px;left:1814.5px;">normal</span>
<div class="rad" style="left:1906.4px;top:656.7px;width:25.0px;height:25.0px;"></div>
<span id="t69" class="t" style="top:656.01px;font-size:23.5px;line-height:23.5px;color:#8a1538;font-weight:bold;letter-spacing:1.972px;left:1942.3px;">x 2</span>
<div class="rad" style="left:1994.0px;top:656.7px;width:25.0px;height:25.0px;"></div>
<span id="t70" class="t" style="top:656.01px;font-size:23.5px;line-height:23.5px;color:#8a1538;font-weight:bold;letter-spacing:2.072px;left:2030.6px;">x 5</span>
<span id="t71" class="t" style="top:658.11px;font-size:23.5px;line-height:23.5px;color:#8b0a8b;font-weight:bold;letter-spacing:-0.313px;left:2128.4px;">Form opacity</span>
<span id="t72" class="t" style="top:707.71px;font-size:23.5px;line-height:23.5px;color:#8a1538;font-weight:bold;letter-spacing:0.350px;left:1700.0px;">Scroll range x1.25</span>
<div class="cb" style="left:1922.0px;top:706.4px;width:25.4px;height:25.4px;"></div>
<div style="left:2086.0px;top:692.9px;width:229.7px;height:41.0px;background:#fbe3dc;"></div>
<div style="left:2097.6px;top:705.5px;width:199.4px;height:5.4px;background:#e9f1ea;border:1px solid #e0e4dc;"></div>
<svg width="2328" height="1733"><path d="M2285.7 696 h16.4 v17.1 l-8.2 8.2 l-8.2 -8.2 Z" fill="#1d7ad6"/></svg>
<svg width="2328" height="1733"><rect x="2106.4" y="725.4" width="1.3" height="5.4" fill="#b9b0b0"/><rect x="2144.0" y="725.4" width="1.3" height="5.4" fill="#b9b0b0"/><rect x="2181.6" y="725.4" width="1.3" height="5.4" fill="#b9b0b0"/><rect x="2219.2" y="725.4" width="1.3" height="5.4" fill="#b9b0b0"/><rect x="2256.8" y="725.4" width="1.3" height="5.4" fill="#b9b0b0"/><rect x="2294.4" y="725.4" width="1.3" height="5.4" fill="#b9b0b0"/></svg>
<span id="t73" class="t" style="top:767.65px;font-size:22.5px;line-height:22.5px;color:#0c0c18;letter-spacing:-0.566px;left:1669.5px;">RMS fit 0.4 ±0.7 km</span>
<div style="left:1654.8px;top:804.7px;width:653.5px;height:845.0px;background:#fcfcfa;border-style:solid;border-width:3px 1px 1px 3px;border-color:#7a7a7a #ececec #ececec #7a7a7a;"></div>
<div style="left:1668.4px;top:819.0px;width:131.6px;height:6.0px;background:#6a22b4;box-shadow:0 0 0 1px #b89ad8;"></div>
<div style="left:1668.4px;top:842.7px;width:131.6px;height:6.0px;background:#ea2630;box-shadow:0 0 0 1px #f4a0a4;"></div>
<div style="left:1670.5px;top:868.4px;width:5.0px;height:5.0px;background:#e048c8;border-radius:50%;"></div>
<div style="left:1700.4px;top:868.4px;width:5.0px;height:5.0px;background:#e048c8;border-radius:50%;"></div>
<div style="left:1730.3px;top:868.4px;width:5.0px;height:5.0px;background:#e048c8;border-radius:50%;"></div>
<div style="left:1760.2px;top:868.4px;width:5.0px;height:5.0px;background:#e048c8;border-radius:50%;"></div>
<div style="left:1790.1px;top:868.4px;width:5.0px;height:5.0px;background:#e048c8;border-radius:50%;"></div>
<span id="t74" class="t" style="top:811.65px;font-size:27.2px;line-height:27.2px;color:#181420;font-family:'Liberation Mono', 'Courier New', monospace;left:1847.9px;transform:scaleY(.82);transform-origin:0 77%;">1    J Dunham, near Fountain</span>
<span id="t75" class="t" style="top:835.35px;font-size:27.2px;line-height:27.2px;color:#181420;font-family:'Liberation Mono', 'Courier New', monospace;left:1847.9px;transform:scaleY(.82);transform-origin:0 77%;">2    P Maley, near Fort McDo</span>
<span id="t76" class="t" style="top:858.95px;font-size:27.2px;line-height:27.2px;color:#181420;font-family:'Liberation Mono', 'Courier New', monospace;left:1847.9px;transform:scaleY(.82);transform-origin:0 77%;">3(P) Predicted</span>
<div style="left:1658.0px;top:1617.0px;width:649.0px;height:31.5px;background:#f4f6f4;"></div>
<div style="left:1691.5px;top:1630.0px;width:481.0px;height:3.5px;background:#8a8a8a;"></div>
<div style="left:1610.3px;top:888.0px;width:1.6px;height:34.0px;background:#8c8c8c;"></div>
<div style="left:1422.3px;top:974.3px;width:899.2px;height:265.6px;background:#c4d8f0;border:2px solid #6c6c6c;border-right-color:#5a5a5a;"></div>
<span id="t77" class="t" style="top:989.68px;font-size:24px;line-height:24px;color:#2e3f70;font-weight:bold;letter-spacing:0.344px;left:1426.7px;">DAMIT</span>
<div style="left:1515.5px;top:981.6px;width:29.3px;height:34.8px;background:#fbfcfd;border-radius:6px;"></div>
<div style="left:1519.7px;top:985.7px;width:20.9px;height:26.6px;background:#80d8c0;"></div>
<span id="t78" class="t" style="top:989.95px;font-size:22.5px;line-height:22.5px;color:#111;left:1030.2px;width:1000px;text-align:center;">1</span>
<div style="left:1551.2px;top:981.6px;width:29.3px;height:34.8px;background:#fbfcfd;border-radius:6px;"></div>
<div style="left:1555.4px;top:985.7px;width:20.9px;height:26.6px;background:#20ee20;"></div>
<span id="t79" class="t" style="top:989.11px;font-size:23.5px;line-height:23.5px;color:#111;font-weight:bold;left:1065.9px;width:1000px;text-align:center;">2</span>
<div style="left:1587.0px;top:981.6px;width:29.3px;height:34.8px;background:#eef2f8;border-radius:6px;border:1px solid #f4f6fa;"></div>
<span id="t80" class="t" style="top:989.95px;font-size:22.5px;line-height:22.5px;color:#c7c1cb;left:1101.7px;width:1000px;text-align:center;">3</span>
<div style="left:1623.0px;top:981.6px;width:29.3px;height:34.8px;background:#eef2f8;border-radius:6px;border:1px solid #f4f6fa;"></div>
<span id="t81" class="t" style="top:989.95px;font-size:22.5px;line-height:22.5px;color:#c7c1cb;left:1137.6px;width:1000px;text-align:center;">4</span>
<div style="left:1658.9px;top:981.6px;width:29.3px;height:34.8px;background:#eef2f8;border-radius:6px;border:1px solid #f4f6fa;"></div>
<span id="t82" class="t" style="top:989.95px;font-size:22.5px;line-height:22.5px;color:#c7c1cb;left:1173.6px;width:1000px;text-align:center;">5</span>
<div style="left:1694.8px;top:981.6px;width:29.3px;height:34.8px;background:#eef2f8;border-radius:6px;border:1px solid #f4f6fa;"></div>
<span id="t83" class="t" style="top:989.95px;font-size:22.5px;line-height:22.5px;color:#c7c1cb;left:1209.5px;width:1000px;text-align:center;">6</span>
<div style="left:1737.5px;top:981.6px;width:140.0px;height:34.8px;background:#f4f8fb;border-radius:6px;"></div>
<div style="left:1741.5px;top:985.7px;width:132.5px;height:28.0px;background:#bfeaf0;"></div>
<span id="t84" class="t" style="top:989.11px;font-size:23.5px;line-height:23.5px;color:#101830;letter-spacing:-1.053px;left:1747.5px;">Light curves</span>
<span id="t85" class="t" style="top:989.68px;font-size:24px;line-height:24px;color:#2e3f70;font-weight:bold;letter-spacing:0.053px;left:1890.6px;">ISAM</span>
<div style="left:1962.3px;top:981.6px;width:30.0px;height:34.8px;background:#eef2f8;border-radius:6px;border:1px solid #f4f6fa;"></div>
<span id="t86" class="t" style="top:989.95px;font-size:22.5px;line-height:22.5px;color:#c7c1cb;left:1477.3px;width:1000px;text-align:center;">1</span>
<div style="left:2010.3px;top:981.6px;width:30.0px;height:34.8px;background:#eef2f8;border-radius:6px;border:1px solid #f4f6fa;"></div>
<span id="t87" class="t" style="top:989.95px;font-size:22.5px;line-height:22.5px;color:#c7c1cb;left:1525.3px;width:1000px;text-align:center;">2</span>
<div style="left:2058.3px;top:981.6px;width:30.0px;height:34.8px;background:#eef2f8;border-radius:6px;border:1px solid #f4f6fa;"></div>
<span id="t88" class="t" style="top:989.95px;font-size:22.5px;line-height:22.5px;color:#c7c1cb;left:1573.3px;width:1000px;text-align:center;">3</span>
<div style="left:2106.3px;top:981.6px;width:30.0px;height:34.8px;background:#eef2f8;border-radius:6px;border:1px solid #f4f6fa;"></div>
<span id="t89" class="t" style="top:989.95px;font-size:22.5px;line-height:22.5px;color:#c7c1cb;left:1621.3px;width:1000px;text-align:center;">4</span>
<div style="left:2154.3px;top:981.6px;width:30.0px;height:34.8px;background:#eef2f8;border-radius:6px;border:1px solid #f4f6fa;"></div>
<span id="t90" class="t" style="top:989.95px;font-size:22.5px;line-height:22.5px;color:#c7c1cb;left:1669.3px;width:1000px;text-align:center;">5</span>
<div style="left:2202.3px;top:981.6px;width:30.0px;height:34.8px;background:#eef2f8;border-radius:6px;border:1px solid #f4f6fa;"></div>
<span id="t91" class="t" style="top:989.95px;font-size:22.5px;line-height:22.5px;color:#c7c1cb;left:1717.3px;width:1000px;text-align:center;">6</span>
<div style="left:2251.5px;top:980.0px;width:28.5px;height:34.0px;background:#f6f9fc;border-radius:4px;"></div>
<div style="left:2255.6px;top:984.0px;width:20.6px;height:25.8px;background:#3c50e0;"></div>
<span id="t92" class="t" style="top:987.18px;font-size:24px;line-height:24px;color:#ffff20;font-weight:bold;left:1766.0px;width:1000px;text-align:center;">?</span>
<div style="left:2283.8px;top:980.0px;width:29.5px;height:34.0px;background:#f6f9fc;border-radius:4px;"></div>
<div style="left:2287.8px;top:984.0px;width:21.8px;height:25.8px;background:#e0223c;"></div>
<span id="t93" class="t" style="top:987.53px;font-size:23px;line-height:23px;color:#fff;font-weight:bold;left:1798.8px;width:1000px;text-align:center;">X</span>
<span id="t94" class="t" style="top:1022.23px;font-size:23px;line-height:23px;color:#35578c;letter-spacing:-1.101px;left:1437.6px;">Source</span>
<span id="t95" class="t" style="top:1022.23px;font-size:23px;line-height:23px;color:#35578c;letter-spacing:-3.230px;left:1556.8px;">ID</span>
<span id="t96" class="t" style="top:1022.23px;font-size:23px;line-height:23px;color:#35578c;letter-spacing:-0.411px;left:1624.2px;">Surf/Vol</span>
<div class="tb" style="left:1432.6px;top:1049.0px;width:78.2px;height:36.0px;"></div>
<span id="t97" class="t" style="top:1056.85px;font-size:22.5px;line-height:22.5px;color:#1a1430;letter-spacing:-1.619px;left:1438.4px;">DAMIT</span>
<div style="left:1514.1px;top:1049.0px;width:107.8px;height:36.6px;background:#f3f6f6;border-bottom:3.5px solid #1a6fd0;border-radius:3px;"></div>
<div style="left:1520.3px;top:1054.6px;width:48.1px;height:25.0px;background:#1e78d7;"></div>
<div style="left:1567.6px;top:1054.6px;width:1.6px;height:25.0px;background:#f08a2a;"></div>
<span id="t98" class="t" style="top:1056.85px;font-size:22.5px;line-height:22.5px;color:#fff;letter-spacing:-1.013px;left:1520.2px;">1913</span>
<div class="tb" style="left:1624.4px;top:1049.0px;width:76.3px;height:36.0px;"></div>
<span id="t99" class="t" style="top:1056.85px;font-size:22.5px;line-height:22.5px;color:#1a1430;letter-spacing:-0.622px;left:1630.5px;">1.037</span>
<div style="left:1705.2px;top:1021.0px;width:602.3px;height:100.3px;background:#fbe3dc;border-style:solid;border-width:3px 0 3px 3px;border-color:#707070 #fff #fdfdfd #707070;"></div>
<span id="t100" class="t" style="top:1024.23px;font-size:23px;line-height:23px;color:#0c0c18;letter-spacing:-1.137px;left:1751.8px;">Fit quality</span>
<span id="t101" class="t" style="top:1024.23px;font-size:23px;line-height:23px;color:#0c0c18;letter-spacing:-1.611px;left:1908.3px;">Ph Corrn</span>
<span id="t102" class="t" style="top:1024.23px;font-size:23px;line-height:23px;color:#0c0c18;letter-spacing:-1.531px;left:2009.8px;">Minimum dia</span>
<span id="t103" class="t" style="top:1026.33px;font-size:23px;line-height:23px;color:#0c0c18;letter-spacing:-1.650px;left:2162.2px;">Maximum dia</span>
<div style="left:1710.4px;top:1051.0px;width:192.4px;height:39.4px;background:#fdfdfd;border:1px solid #9a9a9a;border-bottom:2px solid #8a8a8a;border-radius:2px;"></div>
<span id="t104" class="t" style="top:1058.43px;font-size:23px;line-height:23px;color:#101030;letter-spacing:-1.531px;left:1716.0px;">Minimum dia</span>
<svg width="2328" height="1733"><polyline points="1878.5,1068 1885.6,1075 1892.7,1068" fill="none" stroke="#333" stroke-width="1.6"/></svg>
<div class="tb" style="left:1914.0px;top:1051.0px;width:74.2px;height:36.5px;"></div>
<span id="t105" class="t" style="top:1058.95px;font-size:22.5px;line-height:22.5px;color:#1a1430;letter-spacing:-0.491px;left:1917.7px;">0°</span>
<div class="tb" style="left:2006.5px;top:1051.0px;width:73.4px;height:38.4px;"></div>
<span id="t106" class="t" style="top:1058.95px;font-size:22.5px;line-height:22.5px;color:#1a1430;letter-spacing:0.494px;left:2009.9px;">59</span>
<div style="left:2085.7px;top:1051.0px;width:58.5px;height:45.6px;background:#f8f6f2;border-radius:6px;"></div>
<div style="left:2089.8px;top:1056.2px;width:50.2px;height:35.7px;background:#c6f23a;"></div>
<span id="t107" class="t" style="top:1061.68px;font-size:24px;line-height:24px;color:#141414;letter-spacing:-1.586px;left:2096.9px;">Set</span>
<div style="left:2163.4px;top:1053.7px;width:71.5px;height:35.6px;background:#f8c0d2;border-bottom:2px solid #8a8a8a;"></div>
<div style="left:2242.0px;top:1051.0px;width:58.5px;height:45.6px;background:#f8f6f2;border-radius:6px;"></div>
<div style="left:2246.1px;top:1056.2px;width:50.2px;height:35.7px;background:#c6f23a;"></div>
<span id="t108" class="t" style="top:1061.68px;font-size:24px;line-height:24px;color:#141414;letter-spacing:-1.586px;left:2253.2px;">Set</span>
<span id="t109" class="t" style="top:1094.13px;font-size:23px;line-height:23px;color:#4a1090;letter-spacing:-1.531px;left:1714.8px;">Minimum dia</span>
<span id="t110" class="t" style="top:1093.05px;font-size:22.5px;line-height:22.5px;color:#4a1090;letter-spacing:-0.491px;left:1915.6px;">0°</span>
<span id="t111" class="t" style="top:1093.05px;font-size:22.5px;line-height:22.5px;color:#4a1090;letter-spacing:0.494px;left:2008.9px;">59</span>
<div style="left:2166.5px;top:1106.0px;width:5.5px;height:2.0px;background:#3a3ab0;"></div>
<div style="left:2178.7px;top:1106.0px;width:5.5px;height:2.0px;background:#3a3ab0;"></div>
<div style="left:2190.9px;top:1106.0px;width:5.5px;height:2.0px;background:#3a3ab0;"></div>
<div style="left:2203.1px;top:1106.0px;width:5.5px;height:2.0px;background:#3a3ab0;"></div>
<div style="left:1428.5px;top:1089.0px;width:67.3px;height:40.6px;background:#ffff20;border:2px solid #5a5a10;"></div>
<span id="t112" class="t" style="top:1098.08px;font-size:24px;line-height:24px;color:#3a0808;font-weight:bold;letter-spacing:0.250px;left:1442.8px;">Dia</span>
<span id="t113" class="t" style="top:1095.15px;font-size:22.5px;line-height:22.5px;color:#3c5a90;font-style:italic;letter-spacing:-1.058px;left:1504.1px;">Values in memory =&gt;</span>
<span id="t114" class="t" style="top:1134.53px;font-size:23px;line-height:23px;color:#35578c;letter-spacing:-0.994px;left:1437.6px;">Version info</span>
<div class="tb" style="left:1559.0px;top:1129.6px;width:538.0px;height:35.2px;"></div>
<span id="t115" class="t" style="top:1137.45px;font-size:22.5px;line-height:22.5px;color:#1a1430;letter-spacing:-0.668px;left:1563.6px;">2018-07-18, Q=1.5</span>
<span id="t116" class="t" style="top:1184.73px;font-size:23px;line-height:23px;color:#35578c;letter-spacing:-1.105px;left:1435.6px;">Image scale</span>
<div style="left:1560.0px;top:1178.7px;width:537.7px;height:43.1px;background:#fbe3dc;"></div>
<svg width="2328" height="1733"><rect x="1579.6" y="1189.7" width="1.3" height="6.3" fill="#bdb4b8"/><rect x="1591.7" y="1189.7" width="1.3" height="6.3" fill="#bdb4b8"/><rect x="1603.9" y="1189.7" width="1.3" height="6.3" fill="#bdb4b8"/><rect x="1616.0" y="1189.7" width="1.3" height="6.3" fill="#bdb4b8"/><rect x="1628.2" y="1189.7" width="1.3" height="6.3" fill="#bdb4b8"/><rect x="1640.3" y="1189.7" width="1.3" height="6.3" fill="#bdb4b8"/><rect x="1652.4" y="1189.7" width="1.3" height="6.3" fill="#bdb4b8"/><rect x="1664.6" y="1189.7" width="1.3" height="6.3" fill="#bdb4b8"/><rect x="1676.7" y="1189.7" width="1.3" height="6.3" fill="#bdb4b8"/><rect x="1688.9" y="1189.7" width="1.3" height="6.3" fill="#bdb4b8"/><rect x="1701.0" y="1189.7" width="1.3" height="6.3" fill="#bdb4b8"/><rect x="1713.1" y="1189.7" width="1.3" height="6.3" fill="#bdb4b8"/><rect x="1725.3" y="1189.7" width="1.3" height="6.3" fill="#bdb4b8"/><rect x="1737.4" y="1189.7" width="1.3" height="6.3" fill="#bdb4b8"/><rect x="1749.6" y="1189.7" width="1.3" height="6.3" fill="#bdb4b8"/><rect x="1761.7" y="1189.7" width="1.3" height="6.3" fill="#bdb4b8"/><rect x="1773.8" y="1189.7" width="1.3" height="6.3" fill="#bdb4b8"/><rect x="1786.0" y="1189.7" width="1.3" height="6.3" fill="#bdb4b8"/><rect x="1798.1" y="1189.7" width="1.3" height="6.3" fill="#bdb4b8"/><rect x="1810.3" y="1189.7" width="1.3" height="6.3" fill="#bdb4b8"/><rect x="1822.4" y="1189.7" width="1.3" height="6.3" fill="#bdb4b8"/><rect x="1834.5" y="1189.7" width="1.3" height="6.3" fill="#bdb4b8"/><rect x="1846.7" y="1189.7" width="1.3" height="6.3" fill="#bdb4b8"/><rect x="1858.8" y="1189.7" width="1.3" height="6.3" fill="#bdb4b8"/><rect x="1871.0" y="1189.7" width="1.3" height="6.3" fill="#bdb4b8"/><rect x="1883.1" y="1189.7" width="1.3" height="6.3" fill="#bdb4b8"/><rect x="1895.2" y="1189.7" width="1.3" height="6.3" fill="#bdb4b8"/><rect x="1907.4" y="1189.7" width="1.3" height="6.3" fill="#bdb4b8"/><rect x="1919.5" y="1189.7" width="1.3" height="6.3" fill="#bdb4b8"/><rect x="1931.7" y="1189.7" width="1.3" height="6.3" fill="#bdb4b8"/><rect x="1943.8" y="1189.7" width="1.3" height="6.3" fill="#bdb4b8"/><rect x="1955.9" y="1189.7" width="1.3" height="6.3" fill="#bdb4b8"/><rect x="1968.1" y="1189.7" width="1.3" height="6.3" fill="#bdb4b8"/><rect x="1980.2" y="1189.7" width="1.3" height="6.3" fill="#bdb4b8"/><rect x="1992.4" y="1189.7" width="1.3" height="6.3" fill="#bdb4b8"/><rect x="2004.5" y="1189.7" width="1.3" height="6.3" fill="#bdb4b8"/><rect x="2016.6" y="1189.7" width="1.3" height="6.3" fill="#bdb4b8"/><rect x="2028.8" y="1189.7" width="1.3" height="6.3" fill="#bdb4b8"/><rect x="2040.9" y="1189.7" width="1.3" height="6.3" fill="#bdb4b8"/><rect x="2053.1" y="1189.7" width="1.3" height="6.3" fill="#bdb4b8"/><rect x="2065.2" y="1189.7" width="1.3" height="6.3" fill="#bdb4b8"/><rect x="2077.3" y="1189.7" width="1.3" height="6.3" fill="#bdb4b8"/></svg>
<div style="left:1572.0px;top:1211.0px;width:511.6px;height:6.7px;background:#e9f1ea;border:1px solid #e0e4dc;"></div>
<svg width="2328" height="1733"><path d="M1873.8 1221.8 h16 v-13.1 l-8.0 -8.0 l-8.0 8.0 Z" fill="#1d7ad6"/></svg>
<div style="left:2116.8px;top:1134.8px;width:194.8px;height:92.2px;background:#f8f4f6;border-radius:6px;"></div>
<div style="left:2122.0px;top:1140.0px;width:183.8px;height:81.8px;background:#f8c0d2;"></div>
<span id="t117" class="t" style="top:1155.88px;font-size:24px;line-height:24px;color:#b01030;font-weight:bold;letter-spacing:0.797px;left:2137.3px;">Save/update</span>
<span id="t118" class="t" style="top:1181.78px;font-size:24px;line-height:24px;color:#b01030;font-weight:bold;letter-spacing:0.225px;left:2144.6px;">model 1913</span>
</body></html>
